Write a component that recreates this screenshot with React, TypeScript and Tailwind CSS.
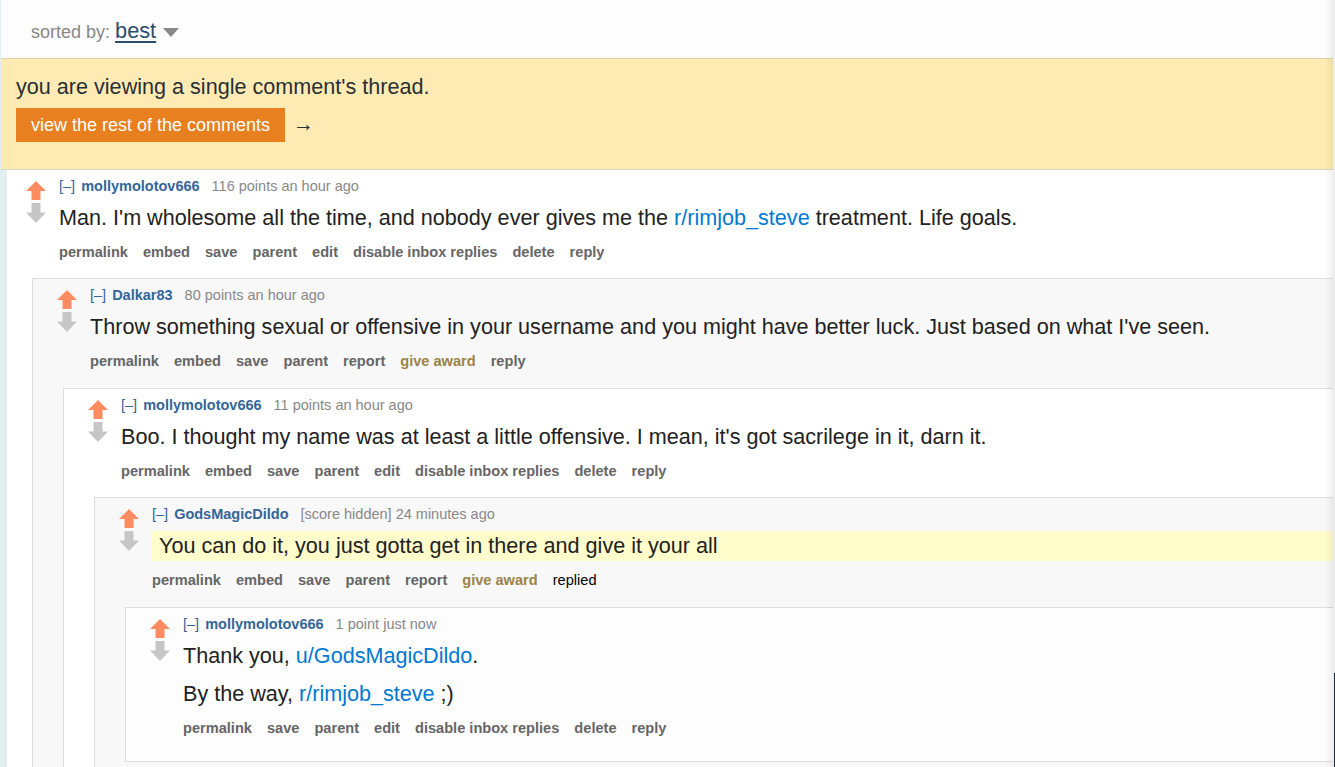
import React from "react";

type Seg = string | { link: string };
type Btn = { t: string; kind?: "gold" | "plain" };
type C = {
  user: string;
  score: string;
  time: string;
  paras: Seg[][];
  highlight?: boolean;
  buttons: Btn[];
  bg: string;
  child?: C;
};

const Up = () => (
  <svg width="20" height="19" viewBox="0 0 20 19" className="block">
    <polygon points="10,0 20,10 14.5,10 14.5,19 5.5,19 5.5,10 0,10" fill="#ff8b60" />
  </svg>
);
const Down = () => (
  <svg width="20" height="20" viewBox="0 0 20 20" className="block">
    <polygon points="5.5,0 14.5,0 14.5,9.5 20,9.5 10,20 0,9.5 5.5,9.5" fill="#c6c6c6" />
  </svg>
);

const own: Btn[] = [
  { t: "permalink" },
  { t: "embed" },
  { t: "save" },
  { t: "parent" },
  { t: "edit" },
  { t: "disable inbox replies" },
  { t: "delete" },
  { t: "reply" },
];

const data: C = {
  user: "mollymolotov666",
  score: "116 points",
  time: "an hour ago",
  paras: [
    [
      "Man. I'm wholesome all the time, and nobody ever gives me the ",
      { link: "r/rimjob_steve" },
      " treatment. Life goals.",
    ],
  ],
  buttons: own,
  bg: "bg-white",
  child: {
    user: "Dalkar83",
    score: "80 points",
    time: "an hour ago",
    paras: [
      [
        "Throw something sexual or offensive in your username and you might have better luck. Just based on what I've seen.",
      ],
    ],
    buttons: [
      { t: "permalink" },
      { t: "embed" },
      { t: "save" },
      { t: "parent" },
      { t: "report" },
      { t: "give award", kind: "gold" },
      { t: "reply" },
    ],
    bg: "bg-[#f8f8f8]",
    child: {
      user: "mollymolotov666",
      score: "11 points",
      time: "an hour ago",
      paras: [
        [
          "Boo. I thought my name was at least a little offensive. I mean, it's got sacrilege in it, darn it.",
        ],
      ],
      buttons: own,
      bg: "bg-white",
      child: {
        user: "GodsMagicDildo",
        score: "[score hidden]",
        time: "24 minutes ago",
        highlight: true,
        paras: [["You can do it, you just gotta get in there and give it your all"]],
        buttons: [
          { t: "permalink" },
          { t: "embed" },
          { t: "save" },
          { t: "parent" },
          { t: "report" },
          { t: "give award", kind: "gold" },
          { t: "replied", kind: "plain" },
        ],
        bg: "bg-[#f8f8f8]",
        child: {
          user: "mollymolotov666",
          score: "1 point",
          time: "just now",
          paras: [
            ["Thank you, ", { link: "u/GodsMagicDildo" }, "."],
            ["By the way, ", { link: "r/rimjob_steve" }, " ;)"],
          ],
          buttons: [
            { t: "permalink" },
            { t: "save" },
            { t: "parent" },
            { t: "edit" },
            { t: "disable inbox replies" },
            { t: "delete" },
            { t: "reply" },
          ],
          bg: "bg-[#fdfdfd]",
        },
      },
    },
  },
};

function Entry({ c, top }: { c: C; top: boolean }) {
  return (
    <div className={`flex ${top ? "pl-[19px]" : "pl-[24px]"}`}>
      <div className="w-[20px] shrink-0 flex flex-col gap-[3px] mt-[5px]">
        <Up />
        <Down />
      </div>
      <div className="ml-[13px] flex-1 min-w-0">
        <div className="h-[20px] leading-[20px] text-[14.5px] whitespace-nowrap">
          <span className="text-[#336699] mr-[6px]">[–]</span>
          <span className="text-[#336699] font-bold">{c.user}</span>
          <span className="text-[#888888] ml-[12px]">
            {c.score} {c.time}
          </span>
        </div>
        <div
          className={`mt-[7px] flex flex-col gap-[8px] text-[21.6px] leading-[30px] text-[#222222] ${
            c.highlight ? "bg-[#fffdcc] pl-[7px]" : ""
          }`}
        >
          {c.paras.map((p, i) => (
            <p key={i} className="whitespace-nowrap">
              {p.map((s, j) =>
                typeof s === "string" ? (
                  <span key={j}>{s}</span>
                ) : (
                  <span key={j} className="text-[#0079d3]">
                    {s.link}
                  </span>
                )
              )}
            </p>
          ))}
        </div>
        <div className="mt-[9px] h-[20px] leading-[20px] flex gap-[15px] text-[14.6px] whitespace-nowrap">
          {c.buttons.map((b) => (
            <span
              key={b.t}
              className={
                b.kind === "gold"
                  ? "font-bold text-[#9c8346]"
                  : b.kind === "plain"
                  ? "text-black"
                  : "font-bold text-[#666666]"
              }
            >
              {b.t}
            </span>
          ))}
        </div>
      </div>
    </div>
  );
}

function Nested({ c }: { c: C }) {
  return (
    <div
      className={`border-l border-t border-b border-[#dddddd] ${c.bg} pt-[6px] ${
        c.child ? "pb-[20px]" : "pb-[23px]"
      }`}
    >
      <Entry c={c} top={false} />
      {c.child && (
        <div className="ml-[30px] mt-[16.5px]">
          <Nested c={c.child} />
        </div>
      )}
    </div>
  );
}

export default function App() {
  return (
    <div
      className="relative w-[1335px] h-[767px] overflow-hidden bg-[#e1eff0]"
      style={{ fontFamily: '"Liberation Sans", Arial, sans-serif' }}
    >
      <div className="ml-[1px] w-[1332px] h-[58px] bg-[#fdfdfe] pl-[30px] pt-[19px] flex items-baseline">
        <span className="text-[18px] text-[#888888] leading-[24px]">sorted by:</span>
        <span className="ml-[5px] text-[21.75px] leading-[24px] text-[#2b4d6f] underline decoration-[1.5px] underline-offset-[3px]">
          best
        </span>
        <svg width="16" height="9" viewBox="0 0 16 9" className="ml-[7px] self-start mt-[9px]">
          <polygon points="0,0 16,0 8,9" fill="#888888" />
        </svg>
      </div>
      <div className="ml-[1px] w-[1332px] h-[112px] bg-[#feebb4] border-t border-[#e3d3a2] border-b border-b-[#d8d6cc] pl-[15px] pt-[15px]">
        <div className="text-[21.6px] leading-[26px] text-[#2a2f36]">
          you are viewing a single comment's thread.
        </div>
        <div className="mt-[8px] flex items-center">
          <span className="bg-[#e8801f] text-white text-[18px] h-[34px] leading-[34px] px-[15px]">
            view the rest of the comments
          </span>
          <span className="ml-[8px] text-[21px] leading-[34px] -mt-[3px] text-[#2a2f36]">→</span>
        </div>
      </div>
      <div className="ml-[7px] w-[1326px] bg-white pt-[6px]">
        <Entry c={data} top={true} />
        {data.child && (
          <div className="ml-[25px] mt-[16px]">
            <Nested c={data.child} />
          </div>
        )}
      </div>
      <div className="absolute top-0 right-[2px] w-[8px] h-full bg-gradient-to-r from-transparent to-[rgba(0,0,0,0.06)]" />
      <div className="absolute top-0 right-0 w-[2px] h-full bg-[#ececec]" />
      <div className="absolute top-[673px] right-0 w-[1.5px] h-[94px] bg-[#1c2b3a]" />
    </div>
  );
}
